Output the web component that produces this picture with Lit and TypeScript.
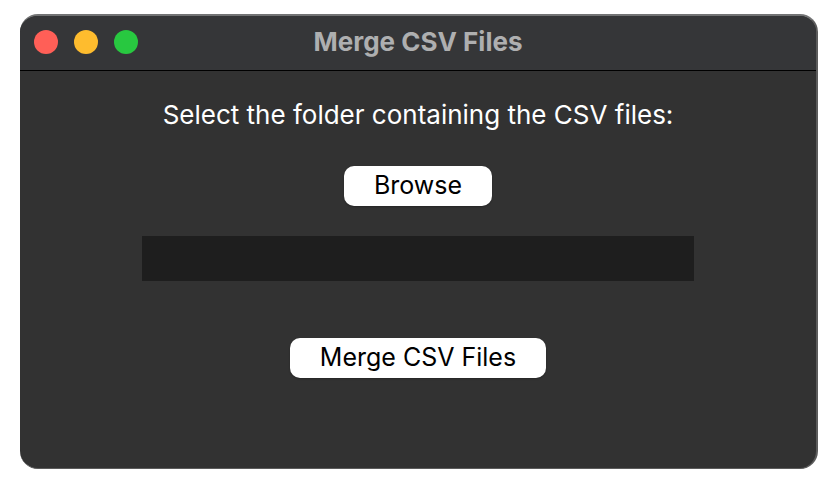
import { LitElement, html, css } from "lit";
import { customElement, state } from "lit/decorators.js";

@customElement("app-root")
export class AppRoot extends LitElement {
  @state() private folder = "";

  static styles = css`
    :host {
      display: flex;
      box-sizing: border-box;
      min-height: 100vh;
      padding: 14px 18px 19px 20px;
      background: #fff;
      font-family: Inter, "Liberation Sans", sans-serif;
      font-size: 26px;
      line-height: 32px;
    }
    .window {
      flex: 1;
      min-width: 0;
      display: flex;
      flex-direction: column;
      box-sizing: border-box;
      overflow: hidden;
      border: solid #5c5c5c;
      border-width: 2px 2px 1px 0;
      border-top-color: #727374;
      border-radius: 18px;
      background: #323232;
    }
    .titlebar {
      display: grid;
      grid-template-columns: 1fr auto 1fr;
      align-items: center;
      height: 52px;
      padding: 0 14px 2px;
      border-bottom: 1px solid #000;
      background: #353638;
    }
    .lights {
      display: flex;
      gap: 16px;
    }
    .light {
      width: 24px;
      height: 24px;
      padding: 0;
      border: 0;
      border-radius: 50%;
    }
    .close { background: #ff5f57; }
    .minimize { background: #febc2e; }
    .zoom { background: #28c840; }
    h1 {
      margin: 0;
      font-size: 26px;
      line-height: 32px;
      font-weight: 700;
      color: #aeafb0;
    }
    .content {
      display: flex;
      flex-direction: column;
      align-items: center;
      padding: 28px 16px;
    }
    label {
      color: #fff;
      text-align: center;
    }
    .action {
      height: 40px;
      padding: 0 30px 2px;
      border: 0;
      border-radius: 10px;
      background: #fff;
      color: #000;
      font: inherit;
      font-size: 25px;
      box-shadow: 0 1px 2px #0004;
    }
    .browse { margin-top: 35px; }
    .path {
      box-sizing: border-box;
      width: 552px;
      max-width: 100%;
      height: 45px;
      margin: 30px 0 57px;
      padding: 0 8px;
      border: 0;
      border-radius: 0;
      outline: 0;
      background: #1e1e1e;
      color: #fff;
      font: inherit;
    }
  `;

  render() {
    return html`
      <main class="window">
        <header class="titlebar">
          <div class="lights">
            <button class="light close" aria-label="Close"></button>
            <button class="light minimize" aria-label="Minimize"></button>
            <button class="light zoom" aria-label="Zoom"></button>
          </div>
          <h1>Merge CSV Files</h1>
        </header>
        <form class="content" @submit=${(e: Event) => e.preventDefault()}>
          <label for="path">Select the folder containing the CSV files:</label>
          <button class="action browse" type="button">Browse</button>
          <input
            class="path"
            id="path"
            type="text"
            .value=${this.folder}
            @input=${(e: InputEvent) => (this.folder = (e.target as HTMLInputElement).value)}
          />
          <button class="action" type="submit">Merge CSV Files</button>
        </form>
      </main>
    `;
  }
}
